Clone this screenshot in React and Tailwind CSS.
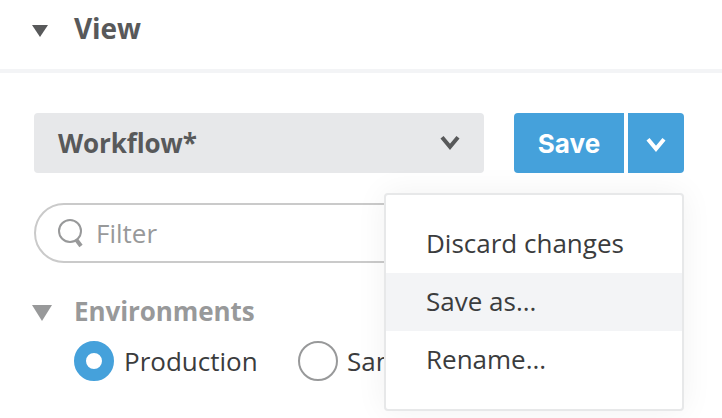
function Chevron({ className = "" }) {
  return (
    <svg className={className} width="20" height="16" viewBox="0 0 20 16" fill="none" stroke="currentColor" strokeWidth="4">
      <path d="M2 2.2 L10 11.8 L18 2.2" />
    </svg>
  );
}

function MenuItem({ children, active }) {
  return (
    <li className={`flex h-[58px] items-center pb-[2px] pl-10 ${active ? "bg-[#f3f4f6]" : ""}`}>
      <span>{children}</span>
    </li>
  );
}

export default function App() {
  return (
    <div className="h-[418px] w-[722px] overflow-hidden bg-white font-['Open_Sans',sans-serif] text-[26px] leading-[36px] whitespace-nowrap text-[#3b3c3d]">
      <header className="flex h-[73px] border-b-4 border-[#f3f4f6] pt-[10px] pl-8 text-[#58595a]">
        <svg className="mt-[15px] shrink-0" width="16" height="12" viewBox="0 0 16 12" fill="currentColor">
          <path d="M0 0H16L8 12Z" />
        </svg>
        <h1 className="ml-[26px] text-[28px] font-bold tracking-[-0.1px]">View</h1>
      </header>

      <main className="pt-10 pl-[34px]">
        <div className="flex h-[60px]">
          <button className="flex w-[450px] items-center justify-between rounded-[4px] bg-[#e7e8ea] pr-6 pl-6 text-[#58595a]">
            <span className="font-bold tracking-[-0.1px]">Workflow*</span>
            <Chevron />
          </button>
          <div className="relative ml-[30px] flex gap-1 text-white">
            <button className="w-[110px] rounded-l-[4px] bg-[#45a1db] pt-[2px] font-['Inter',sans-serif] font-bold">Save</button>
            <button className="flex w-14 items-center justify-center rounded-r-[4px] bg-[#45a1db] pt-1">
              <Chevron />
            </button>
            <ul className="absolute top-20 right-0 z-10 h-[218px] w-[300px] rounded-[4px] border-2 border-[#e7e8e9] bg-white pt-5 text-[#3b3c3d] shadow-[0_0_32px_rgba(0,0,0,0.06)]">
              <MenuItem>Discard changes</MenuItem>
              <MenuItem active>Save as...</MenuItem>
              <MenuItem>Rename...</MenuItem>
            </ul>
          </div>
        </div>

        <div className="mt-[30px] flex h-[60px] w-[650px] items-center rounded-full border-2 border-[#cacaca] pl-[22px] text-[#98999a]">
          <svg width="26" height="30" viewBox="0 0 26 30" fill="none" stroke="currentColor">
            <circle cx="12" cy="13" r="11" strokeWidth="2" />
            <path d="M18.5 22 L23 28" strokeWidth="4" />
          </svg>
          <span className="ml-[12px]">Filter</span>
        </div>

        <section className="pt-[30px]">
          <div className="flex h-9 text-[#98999a]">
            <svg className="-ml-[2px] mt-3 shrink-0" width="20" height="16" viewBox="0 0 20 16" fill="currentColor">
              <path d="M0 0H20L10 16Z" />
            </svg>
            <h2 className="ml-[22px] font-bold tracking-[-0.08px]">Environments</h2>
          </div>
          <div className="mt-3 ml-10 flex h-10 items-center">
            <label className="flex w-[224px] items-center gap-[10px]">
              <span className="size-10 rounded-full border-[12px] border-[#45a1db]" />
              <span>Production</span>
            </label>
            <label className="flex items-center gap-[9px]">
              <span className="size-10 rounded-full border-2 border-[#98999a]" />
              <span>San</span>
            </label>
          </div>
        </section>
      </main>
    </div>
  );
}
